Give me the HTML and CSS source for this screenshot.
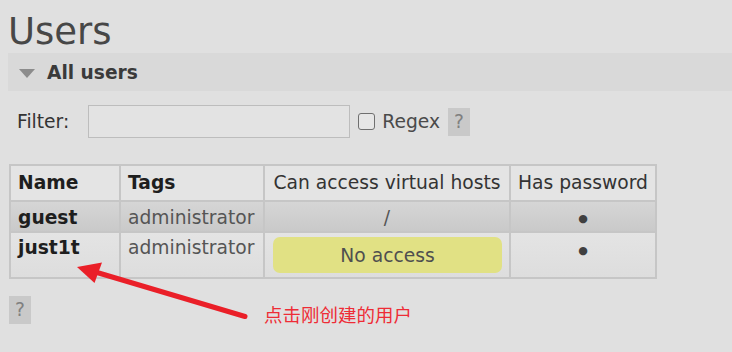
FILE: index.html
```html
<!DOCTYPE html>
<html>
<head>
    <meta charset="utf-8">
    <title>Users</title>
    <link rel="stylesheet" href="styles.css">
</head>
<body>
<div class="page">
    <h1>Users</h1>
    <div class="section-head"><span class="tri"></span>All users</div>

    <!-- 絞り込み -->
    <div class="filter">
        <label class="filter-label">Filter:</label>
        <input class="filter-input" type="text">
        <span class="check"></span>
        <span class="regex">Regex</span>
        <span class="help">?</span>
    </div>

    <table class="list">
        <colgroup>
            <col class="c-name">
            <col class="c-tags">
            <col class="c-vhost">
            <col class="c-pass">
        </colgroup>
        <tr class="head">
            <th class="bold">Name</th>
            <th class="bold">Tags</th>
            <th class="center">Can access virtual hosts</th>
            <th class="center">Has password</th>
        </tr>
        <tr class="alt">
            <td class="bold">guest</td>
            <td class="muted">administrator</td>
            <td class="center muted">/</td>
            <td class="center"><span class="dot">●</span></td>
        </tr>
        <tr class="plain">
            <td class="bold">just1t</td>
            <td class="muted">administrator</td>
            <td><div class="warn">No access</div></td>
            <td class="center"><span class="dot">●</span></td>
        </tr>
    </table>

    <span class="help help-bottom">?</span>
</div>

<!-- 注釈の矢印 -->
<svg class="arrow" width="732" height="352" viewBox="0 0 732 352">
    <line x1="245" y1="316.5" x2="92" y2="271" stroke="#ea1f28" stroke-width="5" stroke-linecap="round"/>
    <polygon points="77,267 102,262.5 94.5,283" fill="#ea1f28"/>
</svg>
<div class="note">点击刚创建的用户</div>
</body>
</html>
```

FILE: styles.css
```css
body {
    margin: 0;
    background: #e0e0e0;
    font-family: "DejaVu Sans", Verdana, sans-serif;
    color: #333;
    overflow: hidden;
}
.page {
    padding-left: 8px;
}
h1 {
    margin: 11px 0 0;
    font-size: 37px;
    line-height: 42px;
    font-weight: normal;
    color: #474747;
}
.section-head {
    display: flex;
    align-items: center;
    height: 38px;
    padding-left: 11px;
    background: #d9d9d9;
    font-size: 18.6px;
    font-weight: bold;
    color: #3a3a3a;
}
.tri {
    width: 0;
    height: 0;
    border-left: 8px solid transparent;
    border-right: 8px solid transparent;
    border-top: 9px solid #8c8c8c;
    margin-right: 12px;
    margin-top: 2px;
}
.filter {
    display: flex;
    align-items: center;
    margin-top: 14px;
    padding-left: 9px;
    font-size: 18.7px;
}
.filter-label {
    color: #333;
}
.filter-input {
    box-sizing: border-box;
    width: 262px;
    height: 33px;
    margin-left: 19px;
    background: #e3e3e3;
    border: 1px solid #bdbdbd;
    border-radius: 0;
}
.check {
    box-sizing: border-box;
    width: 17px;
    height: 17px;
    margin-left: 8px;
    border: 1px solid #6f6f6f;
    border-radius: 3px;
    background: #e6e6e6;
}
.regex {
    margin-left: 7px;
    color: #4a4a4a;
}
.help {
    display: inline-block;
    width: 22px;
    height: 28px;
    line-height: 28px;
    text-align: center;
    background: #c9c9c9;
    color: #808080;
    font-size: 18.7px;
}
.filter .help {
    margin-left: 8px;
}
.list {
    margin: 26px 0 0 1px;
    width: 646px;
    table-layout: fixed;
    border-collapse: collapse;
    font-size: 18.7px;
}
.c-name { width: 110px; }
.c-tags { width: 144px; }
.c-vhost { width: 246px; }
.c-pass { width: 146px; }
.list th, .list td {
    border: 2px solid #c6c6c6;
    padding: 4px 7px;
    line-height: 22px;
    text-align: left;
    vertical-align: top;
    white-space: nowrap;
    color: #333;
}
.list th {
    font-weight: normal;
    padding-top: 6px;
    padding-bottom: 6px;
    vertical-align: middle;
}
.list .bold {
    font-weight: bold;
    color: #1e1e1e;
}
.list .center {
    text-align: center;
}
.list .muted {
    color: #555;
}
.head {
    background: #e4e4e4;
}
.alt {
    background: linear-gradient(#d6d6d6, #c9c9c9);
}
.alt td {
    padding-top: 3px;
    padding-bottom: 1px;
    vertical-align: middle;
}
.plain {
    background: linear-gradient(#e4e4e4, #dddddd);
}
.warn {
    height: 36px;
    line-height: 38px;
    margin-left: 1px;
    border-radius: 7px;
    background: #e1e184;
    color: #4f4f4f;
    text-align: center;
}
.dot {
    font-size: 11px;
    color: #404040;
}
.help-bottom {
    margin-top: 17px;
    margin-left: 1px;
}
/* 注釈 */
.arrow {
    position: absolute;
    left: 0;
    top: 0;
}
.note {
    position: absolute;
    left: 264px;
    top: 302px;
    font-family: "Noto Sans CJK SC", sans-serif;
    font-size: 18.5px;
    line-height: 24px;
    color: #ee2c36;
}
```
